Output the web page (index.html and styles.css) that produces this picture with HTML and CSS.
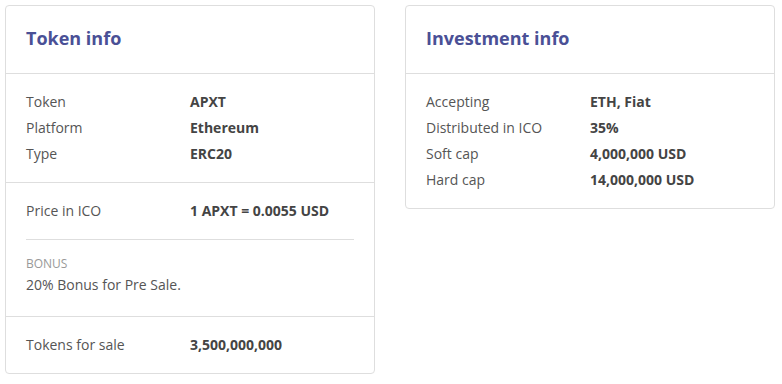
FILE: index.html
```html
<!DOCTYPE html>
<html>
<head>
<meta charset="utf-8">
<link rel="stylesheet" href="styles.css">
</head>
<body>
<div class="page">
  <section class="card">
    <header class="card-head"><h2 class="card-title">Token info</h2></header>
    <div class="card-sec">
      <div class="row"><span class="lbl">Token</span><span class="val">APXT</span></div>
      <div class="row"><span class="lbl">Platform</span><span class="val">Ethereum</span></div>
      <div class="row"><span class="lbl">Type</span><span class="val">ERC20</span></div>
    </div>
    <div class="card-sec">
      <div class="row"><span class="lbl">Price in ICO</span><span class="val">1 APXT = 0.0055 USD</span></div>
      <div class="bonus">
        <div class="bonus-lbl">BONUS</div>
        <div class="bonus-txt">20% Bonus for Pre Sale.</div>
      </div>
    </div>
    <div class="card-sec">
      <div class="row"><span class="lbl">Tokens for sale</span><span class="val">3,500,000,000</span></div>
    </div>
  </section>
  <section class="card">
    <header class="card-head"><h2 class="card-title">Investment info</h2></header>
    <div class="card-sec">
      <div class="row"><span class="lbl">Accepting</span><span class="val">ETH, Fiat</span></div>
      <div class="row"><span class="lbl">Distributed in ICO</span><span class="val">35%</span></div>
      <div class="row"><span class="lbl">Soft cap</span><span class="val">4,000,000 USD</span></div>
      <div class="row"><span class="lbl">Hard cap</span><span class="val">14,000,000 USD</span></div>
    </div>
  </section>
</div>
</body>
</html>
```

FILE: styles.css
```css
* { box-sizing: border-box; }
body {
  margin: 0;
  background: #fff;
  font-family: "Open Sans", "Noto Sans", sans-serif;
  color: #555;
}
.page {
  display: flex;
  align-items: flex-start;
  gap: 30px;
  padding: 5px;
}
.card {
  width: 370px;
  border: 1px solid #dedede;
  border-radius: 4px;
  background: #fff;
}
.card-head {
  height: 68px;
  padding: 0 20px 3px;
  display: flex;
  align-items: center;
  border-bottom: 1px solid #dedede;
}
.card-title {
  margin: 0;
  font-size: 18px;
  font-weight: 700;
  color: #4a5096;
  line-height: 24px;
}
.card-sec {
  padding: 15px 20px;
  border-bottom: 1px solid #dedede;
}
.card-sec:last-child { border-bottom: 0; }
.row {
  display: grid;
  grid-template-columns: 164px 1fr;
  font-size: 14px;
  line-height: 26px;
}
.lbl { color: #555; }
.val { font-weight: 700; color: #444; }
.bonus {
  margin-top: 15px;
  padding-top: 16px;
  border-top: 1px solid #dedede;
  padding-bottom: 3px;
}
.bonus-lbl {
  font-size: 12px;
  line-height: 16px;
  color: #999;
  text-transform: uppercase;
}
.bonus-txt {
  font-size: 14px;
  line-height: 26px;
  color: #555;
}
```
